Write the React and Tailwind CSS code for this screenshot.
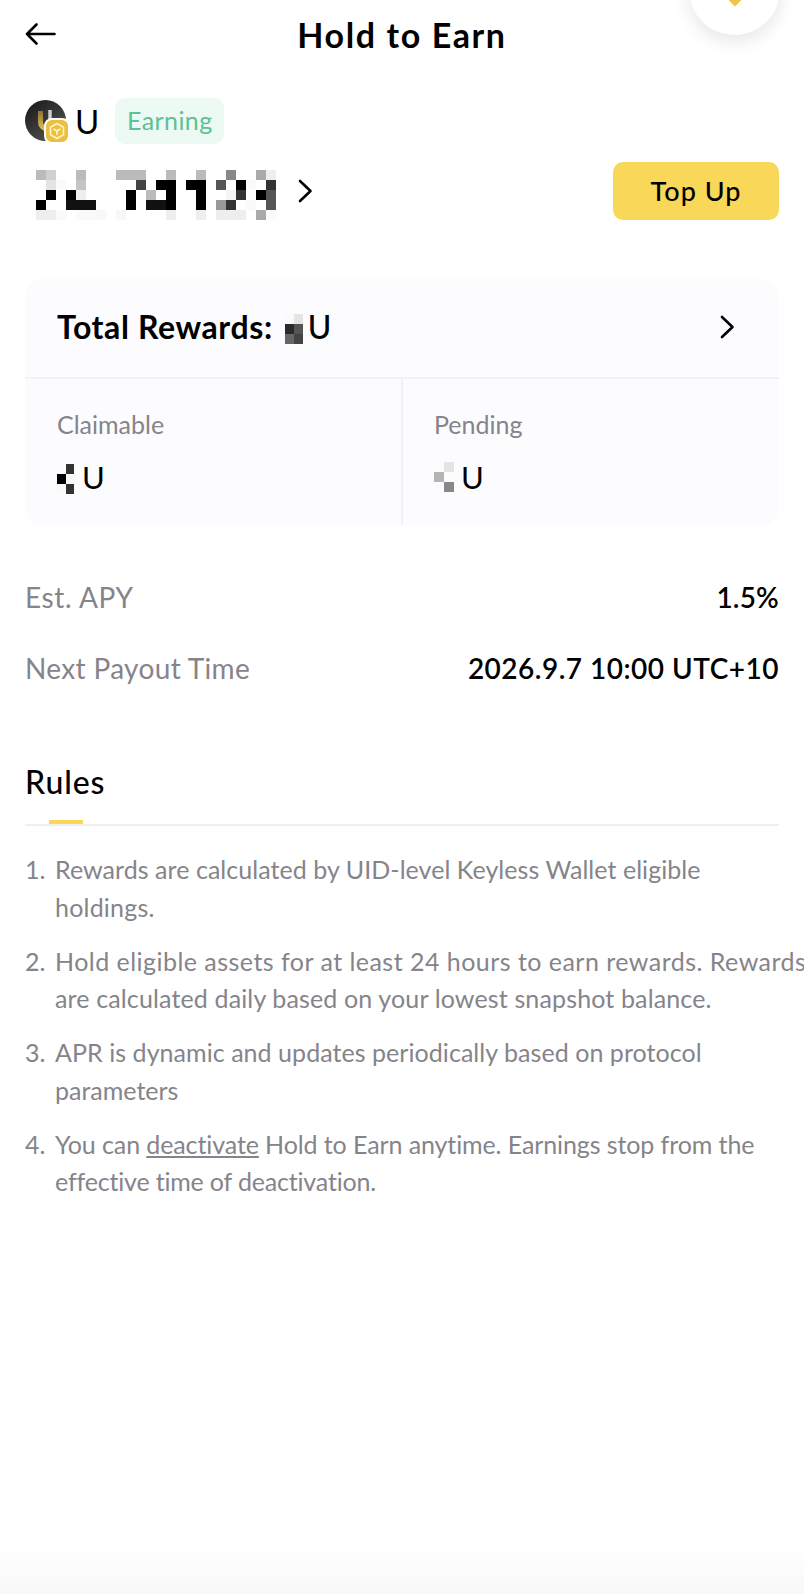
import React from "react";

const Mosaic = ({ cw = 10, ch = 10, rows, className }) => {
  const cols = Math.max(...rows.map((r) => r.length));
  return (
    <svg width={cols * cw} height={rows.length * ch} className={className} shapeRendering="crispEdges">
      {rows.map((r, y) =>
        r.map((c, x) => (c ? <rect key={x + "-" + y} x={x * cw} y={y * ch} width={cw} height={ch} fill={c} /> : null))
      )}
    </svg>
  );
};

const _ = null;
const balance = [
  ["#bbb", "#d0d0d0", _, _, "#bbb", _, _, _, "#bbb", "#bbb", "#bbb", _, _, "#bbb", _, _, "#bbb", _, _, "#888", _, _, "#aaa", "#eee"],
  [_, "#e4e4e4", "#fafafa", _, "#c4c4c4", _, _, _, _, _, "#444", _, "#000", "#000", _, "#000", "#000", _, "#555", _, "#000", "#fafafa", _, "#333"],
  [_, "#000", _, "#000", "#eee", _, _, _, _, "#000", _, "#bbb", _, "#000", _, _, "#000", _, _, "#f5f5f5", "#333", _, "#000", "#555"],
  ["#000", _, _, "#111", "#111", "#111", _, _, _, "#000", _, "#111", "#111", "#000", _, _, "#000", _, "#999", "#333", _, "#fafafa", _, "#555"],
  ["#eee", "#eee", "#fafafa", _, "#fafafa", "#fafafa", "#f8f8f8", _, "#f8f8f8", _, _, _, _, "#eee", _, _, "#eee", _, "#eee", "#eee", "#eee", _, "#aaa", "#fafafa"],
];

const sans = "font-['Lato','Open_Sans',sans-serif]";

const Chevron = ({ className }) => (
  <svg width="15" height="24" viewBox="0 0 15 24" fill="none" className={className}>
    <path d="M2 2l10.5 10L2 22" stroke="#000" strokeWidth="2.6" strokeLinecap="round" strokeLinejoin="round" />
  </svg>
);

export default function App() {
  return (
    <div className={`relative h-[1594px] w-[804px] overflow-hidden bg-gradient-to-b from-white from-[97%] to-[#f8f8f8] px-[25px] text-black ${sans}`}>
      <header className="relative flex h-[69px] items-center justify-center">
        <svg width="31" height="24" viewBox="0 0 31 24" fill="none" className="absolute left-0 top-[22px]">
          <path d="M29.5 12H2M11.5 2.5L2 12l9.5 9.5" stroke="#000" strokeWidth="2.6" strokeLinecap="round" strokeLinejoin="round" />
        </svg>
        <h1 className="-mt-[1px] text-[34px] font-bold tracking-[1.6px]">Hold to Earn</h1>
      </header>
      <div className="absolute right-[24px] top-[-56px] flex h-[91px] w-[91px] items-end justify-center rounded-full bg-white pb-[31px] shadow-[0_6px_18px_rgba(0,0,0,0.1)]">
        <div className="h-[12px] w-[12px] rotate-45 bg-[#efc445]" />
      </div>

      <section className="mt-[29px] flex items-center">
        <div className="relative h-[42px] w-[42px]">
          <svg width="41" height="41" viewBox="0 0 41 41">
            <defs>
              <linearGradient id="coin" x1="0.2" y1="0" x2="1" y2="1">
                <stop offset="0" stopColor="#1c1c1c" />
                <stop offset="1" stopColor="#5c5c5c" />
              </linearGradient>
              <linearGradient id="gold" x1="0" y1="0" x2="0" y2="1">
                <stop offset="0" stopColor="#8a7433" />
                <stop offset="1" stopColor="#e0bb52" />
              </linearGradient>
            </defs>
            <circle cx="20.5" cy="20.5" r="20.5" fill="url(#coin)" />
            <path d="M15.5 11v11a7 7 0 0 0 7 7" stroke="url(#gold)" strokeWidth="5" fill="none" />
            <path d="M25 10v9" stroke="#cfcfcf" strokeWidth="3.5" fill="none" />
          </svg>
          <div className="absolute left-[19px] top-[18px] flex h-[26px] w-[26px] items-center justify-center rounded-[8px] border-2 border-white bg-[#ecc03f]">
            <svg width="18" height="18" viewBox="0 0 18 18" fill="none" stroke="#fff3c8" strokeWidth="1.6" strokeLinejoin="round">
              <path d="M9 1.5l6.5 3.7v7.6L9 16.5l-6.5-3.7V5.2z" />
              <path d="M5.5 7L9 9l3.5-2M9 9v4" />
            </svg>
          </div>
        </div>
        <span className="ml-[8px] text-[33px] leading-none">U</span>
        <span className="ml-[16px] flex h-[46px] w-[109px] items-center justify-center rounded-[10px] bg-[#edf9f3] text-[25px] tracking-[0.4px] text-[#5cc194]">Earning</span>
      </section>

      <section className="mt-[18px] flex h-[58px] items-center">
        <Mosaic rows={balance} className="ml-[11px] mt-[8px]" />
        <Chevron className="ml-[22px]" />
        <button className="ml-auto h-[58px] w-[166px] rounded-[10px] bg-[#f9d759] text-[27px] font-medium tracking-[1px]">Top Up</button>
      </section>

      <section className="mt-[59px] overflow-hidden rounded-[17px] bg-[#fcfbfe]">
        <div className="flex h-[100px] items-center justify-between border-b-2 border-[#f2f1f4] pl-[32px] pr-[44px] pb-[2px]">
          <div className="flex items-center text-[32px] font-bold">
            <span className="tracking-[0.6px]">Total Rewards:</span>
            <Mosaic cw={9} rows={[["#fafafa", "#e4e4e4"], ["#2a2a2a", "#555"], ["#666", "#444"]]} className="ml-[12px] mr-[5px] mt-[4px]" />
            <span className="font-medium">U</span>
          </div>
          <Chevron />
        </div>
        <div className="grid h-[146px] grid-cols-[378px_1fr]">
          <div className="border-r-2 border-[#f2f1f4] pl-[32px] pt-[30px]">
            <div className="text-[25px] leading-[30px] text-[#85848a]">Claimable</div>
            <div className="mt-[25px] flex items-start text-[31px] leading-[30px]">
              <Mosaic cw={8.5} rows={[[_, "#333"], ["#000", "#f8f8f8"], ["#fafafa", "#333"]]} className="mr-[8px]" />
              <span className="-mt-[2px]">U</span>
            </div>
          </div>
          <div className="pl-[31px] pt-[30px]">
            <div className="text-[25px] leading-[30px] text-[#85848a]">Pending</div>
            <div className="mt-[23px] flex items-start text-[31px] leading-[30px]">
              <Mosaic rows={[[_, "#e4e4e4"], ["#b5b5b5", _], [_, "#888"]]} className="mr-[7px]" />
              <span>U</span>
            </div>
          </div>
        </div>
      </section>

      <section className="mt-[52px] space-y-[31px] text-[28px] leading-[40px]">
        <div className="flex justify-between">
          <span className="tracking-[0.6px] text-[#85848a]">Est. APY</span>
          <span className="font-semibold tracking-[0.2px]">1.5%</span>
        </div>
        <div className="flex justify-between">
          <span className="tracking-[0.35px] text-[#85848a]">Next Payout Time</span>
          <span className="font-semibold tracking-[0.5px]">2026.9.7 10:00 UTC+10</span>
        </div>
      </section>

      <section className="mt-[69px]">
        <div className="relative h-[69px] border-b-2 border-[#efeef1]">
          <h2 className="text-[32px] font-medium leading-[50px] tracking-[0.9px]">Rules</h2>
          <div className="absolute bottom-0 left-[24px] h-[4px] w-[34px] bg-[#f9d759]" />
        </div>
        <ol className="mt-[25px] space-y-[16.5px] text-[25px] leading-[37.5px] text-[#85848a]">
          <li className="flex">
            <span className="w-[30px] shrink-0">1.</span>
            <div>
              <div className="whitespace-nowrap tracking-[0.05px]">Rewards are calculated by UID-level Keyless Wallet eligible</div>
              <div className="whitespace-nowrap tracking-[0.2px]">holdings.</div>
            </div>
          </li>
          <li className="flex">
            <span className="w-[30px] shrink-0">2.</span>
            <div>
              <div className="whitespace-nowrap tracking-[0.47px]">Hold eligible assets for at least 24 hours to earn rewards. Rewards</div>
              <div className="whitespace-nowrap tracking-[0.14px]">are calculated daily based on your lowest snapshot balance.</div>
            </div>
          </li>
          <li className="flex">
            <span className="w-[30px] shrink-0">3.</span>
            <div>
              <div className="whitespace-nowrap tracking-[0.05px]">APR is dynamic and updates periodically based on protocol</div>
              <div className="whitespace-nowrap">parameters</div>
            </div>
          </li>
          <li className="flex">
            <span className="w-[30px] shrink-0">4.</span>
            <div>
              <div className="whitespace-nowrap tracking-[-0.1px]">You can <span className="underline">deactivate</span> Hold to Earn anytime. Earnings stop from the</div>
              <div className="whitespace-nowrap tracking-[-0.18px]">effective time of deactivation.</div>
            </div>
          </li>
        </ol>
      </section>
    </div>
  );
}
